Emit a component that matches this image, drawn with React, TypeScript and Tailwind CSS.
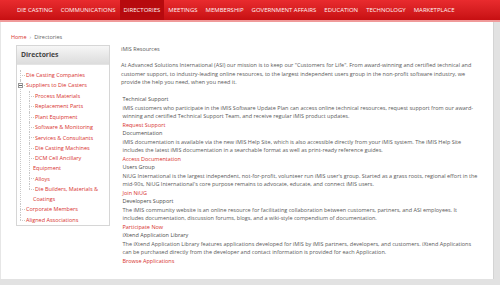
import React from 'react';

const navItems = [
  'DIE CASTING',
  'COMMUNICATIONS',
  'DIRECTORIES',
  'MEETINGS',
  'MEMBERSHIP',
  'GOVERNMENT AFFAIRS',
  'EDUCATION',
  'TECHNOLOGY',
  'MARKETPLACE',
];

const suppliers = [
  'Process Materials',
  'Replacement Parts',
  'Plant Equipment',
  'Software & Monitoring',
  'Services & Consultants',
  'Die Casting Machines',
  'DCM Cell Ancillary Equipment',
  'Alloys',
  'Die Builders, Materials & Coatings',
];

const sections = [
  {
    title: 'Technical Support',
    body: 'iMIS customers who participate in the iMIS Software Update Plan can access online technical resources, request support from our award-winning and certified Technical Support Team, and receive regular iMIS product updates.',
    link: 'Request Support',
  },
  {
    title: 'Documentation',
    body: 'iMIS documentation is available via the new iMIS Help Site, which is also accessible directly from your iMIS system. The iMIS Help Site includes the latest iMIS documentation in a searchable format as well as print-ready reference guides.',
    link: 'Access Documentation',
  },
  {
    title: 'Users Group',
    body: "NiUG International is the largest independent, not-for-profit, volunteer run iMIS user's group. Started as a grass roots, regional effort in the mid-90s, NiUG International's core purpose remains to advocate, educate, and connect iMIS users.",
    link: 'Join NiUG',
  },
  {
    title: 'Developers Support',
    body: 'The iMIS community website is an online resource for facilitating collaboration between customers, partners, and ASI employees. It includes documentation, discussion forums, blogs, and a wiki-style compendium of documentation.',
    link: 'Participate Now',
  },
  {
    title: 'iXtend Application Library',
    body: 'The iXtend Application Library features applications developed for iMIS by iMIS partners, developers, and customers. iXtend Applications can be purchased directly from the developer and contact information is provided for each Application.',
    link: 'Browse Applications',
  },
];

// tree row: dotted elbow drawn with before/after
const branch =
  "relative before:content-[''] before:absolute before:left-0 before:top-[5px] before:w-[5px] before:border-t before:border-dotted before:border-[#c8c8c8] after:content-[''] after:absolute after:left-0 after:top-0 after:h-full after:border-l after:border-dotted after:border-[#c8c8c8] last:after:h-[5px]";

export default function App() {
  return (
    <div className="w-[500px] h-[285px] overflow-hidden bg-[#e2e2e2] font-['Open_Sans',sans-serif]">
      {/* top navigation */}
      <div className="h-[22px] flex items-stretch pl-[13px] bg-gradient-to-b from-[#e92b2e] to-[#c70f12] border-b-2 border-[#f09a9a]">
        {navItems.map((item) => (
          <div
            key={item}
            className={`px-[4px] flex items-center text-[6px] text-[#fff4f4] ${
              item === 'DIRECTORIES' ? 'bg-[#b70a0e]' : ''
            }`}
          >
            {item}
          </div>
        ))}
      </div>

      <div className="w-[494px] h-[257px] bg-white border-l border-[#e6e6e6] border-r border-r-[#d4d4d4]">
        {/* breadcrumb */}
        <div className="pl-[10px] pt-[11px] h-[23px] text-[5.5px] leading-[8px] text-[#666]">
          <span className="text-[#d8332f]">Home</span>
          <span className="mx-[3px] text-[#999]">›</span>
          <span>Directories</span>
        </div>

        <div className="flex pl-[15px] gap-[11px]">
          {/* sidebar */}
          <div className="w-[94px] h-[181px] border border-[#d6d6d6] self-start">
            <div className="h-[19px] px-[4px] flex items-center bg-gradient-to-b from-[#f6f6f6] to-[#dcdcdc] border-b border-[#e4e4e4] text-[6.8px] font-bold text-[#444]">
              Directories
            </div>
            <ul className="pt-[5px] pl-[3px] text-[5.5px] leading-[10.4px] text-[#d8332f]">
              <li className={`${branch} pl-[6px]`}>Die Casting Companies</li>
              <li className={`${branch} pl-[6px]`}>
                <span className="absolute left-[-2.5px] top-[2.5px] z-10 w-[5px] h-[5px] bg-white border border-[#999] flex items-center justify-center">
                  <span className="w-[3px] h-px bg-[#666]" />
                </span>
                Suppliers to Die Casters
                <ul className="ml-[3px]">
                  {suppliers.map((s) => (
                    <li key={s} className={`${branch} pl-[4px] indent-[2px] leading-[10px] py-[0.2px]`}>
                      {s}
                    </li>
                  ))}
                </ul>
              </li>
              <li className={`${branch} pl-[6px]`}>Corporate Members</li>
              <li className={`${branch} pl-[6px]`}>Aligned Associations</li>
            </ul>
          </div>

          {/* main content */}
          <div className="w-[358px] text-[5.5px] leading-[8.5px] text-[#5a5a5a]">
            <p className="mb-[7.5px]">iMIS Resources</p>
            <p className="mb-[8.5px]">
              At Advanced Solutions International (ASI) our mission is to keep our "Customers for Life". From
              award-winning and certified technical and customer support, to industry-leading online resources, to
              the largest independent users group in the non-profit software industry, we provide the help you need,
              when you need it.
            </p>
            <div className="pl-[1.5px]">
              {sections.map((s) => (
                <div key={s.title}>
                  <p className="text-[#4d4d4d]">{s.title}</p>
                  <p>{s.body}</p>
                  <p className="text-[#d8332f]">{s.link}</p>
                </div>
              ))}
            </div>
          </div>
        </div>
      </div>
    </div>
  );
}
